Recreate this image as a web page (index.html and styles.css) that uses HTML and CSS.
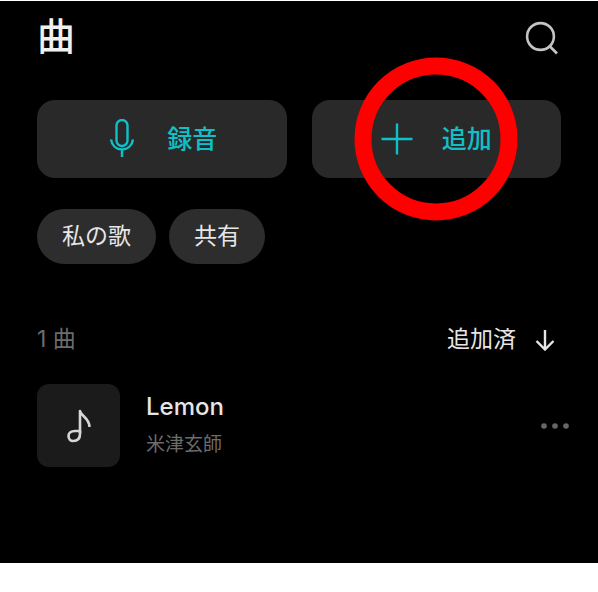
FILE: index.html
```html
<!DOCTYPE html>
<html lang="ja">
<head>
    <meta charset="UTF-8">
    <meta name="viewport" content="width=device-width, initial-scale=1.0">
    <title>曲</title>
    <link rel="stylesheet" href="styles.css">
</head>
<body>

    <main class="screen">
        <header class="header">
            <h1 class="title">曲</h1>
            <button class="icon-button" type="button" aria-label="検索">
                <svg width="36" height="34" viewBox="0 0 36 34" fill="none" stroke="#c4c4c4" stroke-width="2.6">
                    <circle cx="15.5" cy="15.5" r="13.4"/>
                    <path d="M24.5 25l7.500 7.500"/>
                </svg>
            </button>
        </header>

        <div class="actions">
            <button class="action" type="button">
                <svg width="32" height="40" viewBox="0 0 32 40" fill="none" stroke="currentColor" stroke-width="2.400">
                    <rect x="10.500" y="1" width="11" height="26" rx="5.500"/>
                    <path d="M5 20.500c1 6.500 5.500 10 11 10s10-3.500 11-10M16 30.500v7.500"/>
                </svg>
                <span>録音</span>
            </button>
            <button class="action marked" type="button">
                <svg width="32" height="40" viewBox="0 0 32 40" fill="none" stroke="currentColor" stroke-width="2.400">
                    <path d="M0.500 20h31M16 4.500v31"/>
                </svg>
                <span>追加</span>
            </button>
        </div>

        <nav class="chips">
            <button class="chip" type="button">私の歌</button>
            <button class="chip" type="button">共有</button>
        </nav>

        <div class="list-head">
            <span class="count">1 曲</span>
            <button class="sort" type="button">
                <span>追加済</span>
                <svg width="20" height="24" viewBox="0 0 20 24" fill="none" stroke="currentColor" stroke-width="2.400">
                    <path d="M10 3v20M1.500 14l8.500 8.500 8.500-8.500"/>
                </svg>
            </button>
        </div>

        <ul class="songs">
            <li class="song">
                <div class="cover">
                    <svg width="26" height="34" viewBox="0 0 26 34" fill="none" stroke="#d6d6d6" stroke-width="2.600" stroke-linejoin="round">
                        <path d="M14 24V2c1 5 9.500 7 9.500 16"/>
                        <path d="M14 22H9c-4.500 0-6.500 2.200-6.500 5s1.800 5 4.700 5c4.300 0 6.800-2.500 6.800-7z"/>
                    </svg>
                </div>
                <div class="info">
                    <span class="name">Lemon</span>
                    <span class="artist">米津玄師</span>
                </div>
                <button class="more" type="button" aria-label="その他">
                    <svg width="28" height="6" viewBox="0 0 28 6" fill="#676767">
                        <circle cx="3" cy="3" r="2.800"/>
                        <circle cx="14" cy="3" r="2.800"/>
                        <circle cx="25" cy="3" r="2.800"/>
                    </svg>
                </button>
            </li>
        </ul>
    </main>

</body>
</html>
```

FILE: styles.css
```css
*,
*::after {
    box-sizing: border-box;
}

body {
    margin: 0;
    padding-top: 1px;
    background: #fff;
    font-family: Inter, "Noto Sans CJK JP", sans-serif;
    color: #e6e6e6;
}

button {
    padding: 0;
    border: none;
    background: none;
    color: inherit;
    font: inherit;
    cursor: pointer;
}

svg {
    display: block;
    flex: none;
}

.screen {
    padding: 9px 37px 96px;
    background: #000;
}

.header {
    display: flex;
    align-items: center;
    justify-content: space-between;
    height: 56px;
}

.title {
    margin: 0;
    padding-bottom: 4px;
    font-size: 38px;
    line-height: 48px;
    font-weight: 500;
    color: #f0f0f0;
}

.actions {
    display: flex;
    gap: 25px;
    margin-top: 34px;
}

.action {
    position: relative;
    flex: 1;
    display: flex;
    align-items: center;
    justify-content: center;
    gap: 29px;
    height: 78px;
    border-radius: 18px;
    background: #292929;
    color: #0fc0c8;
    font-size: 25px;
    line-height: 32px;
    font-weight: 500;
}

/* 追加ボタンを囲む赤い丸 */
.marked::after {
    content: "";
    position: absolute;
    top: 50%;
    left: 50%;
    width: 163px;
    height: 163px;
    border: 17px solid #f00;
    border-radius: 50%;
    transform: translate(-50%, -50%);
    pointer-events: none;
}

.chips {
    display: flex;
    gap: 13px;
    margin-top: 31px;
}

.chip {
    height: 55px;
    padding: 0 25px 2px;
    border-radius: 28px;
    background: #2d2d2d;
    font-size: 23px;
    line-height: 32px;
}

.list-head {
    display: flex;
    align-items: center;
    justify-content: space-between;
    margin-top: 59px;
    padding-right: 6px;
    font-size: 23px;
    line-height: 32px;
}

.count {
    color: #6c6c6c;
}

.sort {
    display: flex;
    align-items: center;
    gap: 19px;
}

.songs {
    margin: 29px 0 0;
    padding: 0;
    list-style: none;
}

.song {
    display: flex;
    align-items: center;
    margin-right: -8px;
}

.cover {
    display: flex;
    align-items: center;
    justify-content: center;
    width: 83px;
    height: 83px;
    border-radius: 12px;
    background: #1b1b1b;
}

.info {
    flex: 1;
    display: flex;
    flex-direction: column;
    gap: 6px;
    margin-left: 26px;
}

.name {
    font-size: 24px;
    line-height: 32px;
    font-weight: 500;
}

.artist {
    font-size: 19px;
    line-height: 32px;
    color: #6c6c6c;
}
```
